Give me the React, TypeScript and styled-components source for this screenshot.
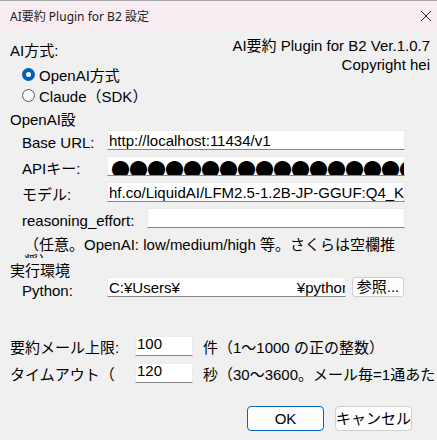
import React from "react";
import styled, { createGlobalStyle } from "styled-components";

const uiFont = `"Liberation Sans", "Noto Sans CJK JP", sans-serif`;

const GlobalStyle = createGlobalStyle`
  html, body {
    margin: 0;
    padding: 0;
    background: #f0f0f0;
  }
  * { box-sizing: border-box; }
`;

const Window = styled.div`
  width: 437px;
  height: 440px;
  background: #f0f0f0;
  border-top: 1px solid #a9a9a9;
  display: flex;
  flex-direction: column;
  font-family: ${uiFont};
  font-size: 15px;
  color: #000;
  overflow: hidden;
`;

const TitleBar = styled.div`
  height: 30px;
  flex: none;
  background: #f7edf3;
  display: flex;
  align-items: center;
  justify-content: space-between;
  padding: 0 5px 0 10px;
  font-family: "Noto Sans", "Noto Sans CJK JP", sans-serif;
  font-size: 12px;
  color: #1b1b1b;
`;

const CloseButton = styled.span`
  display: flex;
  width: 12px;
  height: 12px;
`;

const Body = styled.div`
  display: flex;
  flex-direction: column;
  padding: 0 7px 0 10px;
`;

const Header = styled.div`
  display: flex;
  justify-content: space-between;
  align-items: flex-start;
`;

const LeftCol = styled.div`
  padding-top: 10px;
  display: flex;
  flex-direction: column;
`;

const RightCol = styled.div`
  padding-top: 5px;
  text-align: right;
  line-height: 19px;
  white-space: nowrap;
`;

const Caption = styled.div<{ $h?: number; $mt?: number }>`
  line-height: 20px;
  height: ${(p) => p.$h ?? 20}px;
  margin-top: ${(p) => p.$mt ?? 0}px;
  white-space: nowrap;
`;

const RadioRow = styled.label<{ $first?: boolean }>`
  display: flex;
  align-items: flex-start;
  gap: 4px;
  height: 21px;
  line-height: 20px;
  margin-left: 12px;
  margin-top: ${(p) => (p.$first ? 5 : 0)}px;
  white-space: nowrap;
`;

const RadioMark = styled.span<{ $on?: boolean }>`
  flex: none;
  width: 13px;
  height: 13px;
  margin-top: 2px;
  border-radius: 50%;
  background: ${(p) => (p.$on ? "#005fb8" : "#f7f7f7")};
  border: ${(p) => (p.$on ? "none" : "1px solid #5c5c5c")};
  display: flex;
  align-items: center;
  justify-content: center;

  &::after {
    content: "";
    display: ${(p) => (p.$on ? "block" : "none")};
    width: 5px;
    height: 5px;
    border-radius: 50%;
    background: #fff;
  }
`;

const FieldRow = styled.div<{ $mt?: number }>`
  display: flex;
  align-items: flex-start;
  height: 20px;
  padding-left: 12px;
  margin-top: ${(p) => p.$mt ?? 6}px;
`;

const FieldLabel = styled.span<{ $w: number; $lh?: number }>`
  flex: none;
  width: ${(p) => p.$w}px;
  height: 20px;
  line-height: ${(p) => p.$lh ?? 26}px;
  white-space: nowrap;
`;

const TextBox = styled.div<{ $w: number; $lh?: number }>`
  flex: none;
  width: ${(p) => p.$w}px;
  height: 20px;
  background: #fff;
  border: 1px solid #ebebeb;
  border-bottom-color: #868686;
  padding: 0 1px;
  line-height: ${(p) => p.$lh ?? 20}px;
  white-space: nowrap;
  overflow: hidden;
`;

const Mask = styled.span`
  font-family: "Noto Sans CJK JP", sans-serif;
  font-size: 19px;
  letter-spacing: -1px;
  line-height: 20px;
  display: inline-block;
  padding-left: 2px;
  transform: translateY(2px);
`;

const Gap = styled.span<{ $w: number }>`
  display: inline-block;
  width: ${(p) => p.$w}px;
`;

const Note = styled.div`
  margin-top: 7px;
  padding-left: 14px;
  height: 23px;
  overflow: hidden;
  white-space: nowrap;
`;

const NoteLine = styled.div<{ $lh: number; $pt?: number }>`
  line-height: ${(p) => p.$lh}px;
  padding-top: ${(p) => p.$pt ?? 0}px;
`;

const SmallButton = styled.button`
  flex: none;
  margin-left: 6px;
  width: 52px;
  height: 20px;
  padding: 0;
  background: #fdfdfd;
  border: 1px solid #cfcfcf;
  border-radius: 3px;
  font-family: ${uiFont};
  font-size: 15px;
  line-height: 18px;
  color: #000;
`;

const LimitRow = styled.div<{ $mt: number }>`
  display: flex;
  align-items: flex-start;
  height: 20px;
  margin-top: ${(p) => p.$mt}px;
  white-space: nowrap;
`;

const LimitLabel = styled.span`
  flex: none;
  width: 125px;
  height: 20px;
  line-height: 24px;
`;

const LimitHint = styled.span`
  margin-left: 10px;
  height: 20px;
  line-height: 24px;
`;

const ButtonBar = styled.div`
  display: flex;
  justify-content: flex-end;
  gap: 11px;
  margin-top: 23px;
  padding-right: 18px;
`;

const DialogButton = styled.button<{ $primary?: boolean }>`
  width: 77px;
  height: 25px;
  padding: 0;
  background: #fdfdfd;
  border: 1px solid ${(p) => (p.$primary ? "#0067c0" : "#d0d0d0")};
  border-radius: 4px;
  font-family: ${uiFont};
  font-size: 15px;
  line-height: 23px;
  color: #000;
  white-space: nowrap;
`;

export default function App() {
  return (
    <>
      <GlobalStyle />
      <Window>
        <TitleBar>
          <span>AI要約 Plugin for B2 設定</span>
          <CloseButton>
            <svg width="12" height="12" viewBox="0 0 12 12">
              <path d="M1 1 L11 11 M11 1 L1 11" stroke="#222" strokeWidth="1" fill="none" />
            </svg>
          </CloseButton>
        </TitleBar>
        <Body>
          <Header>
            <LeftCol>
              <Caption>AI方式:</Caption>
              <RadioRow $first>
                <RadioMark $on />
                <span>OpenAI方式</span>
              </RadioRow>
              <RadioRow>
                <RadioMark />
                <span>Claude（SDK）</span>
              </RadioRow>
            </LeftCol>
            <RightCol>
              <div>AI要約 Plugin for B2 Ver.1.0.7</div>
              <div>Copyright hei</div>
            </RightCol>
          </Header>

          <Caption $mt={2}>OpenAI設</Caption>
          <FieldRow $mt={0}>
            <FieldLabel $w={85}>Base URL:</FieldLabel>
            <TextBox $w={298}>http://localhost:11434/v1</TextBox>
          </FieldRow>
          <FieldRow>
            <FieldLabel $w={85}>APIキー:</FieldLabel>
            <TextBox $w={298}>
              <Mask>●●●●●●●●●●●●●●●●●●</Mask>
            </TextBox>
          </FieldRow>
          <FieldRow>
            <FieldLabel $w={85}>モデル:</FieldLabel>
            <TextBox $w={298}>hf.co/LiquidAI/LFM2.5-1.2B-JP-GGUF:Q4_K_M</TextBox>
          </FieldRow>
          <FieldRow>
            <FieldLabel $w={125}>reasoning_effort:</FieldLabel>
            <TextBox $w={258} />
          </FieldRow>
          <Note>
            <NoteLine $lh={18} $pt={1}>（任意。OpenAI: low/medium/high 等。さくらは空欄推</NoteLine>
            <NoteLine $lh={16}>奨）</NoteLine>
          </Note>

          <Caption $mt={3} $h={16}>実行環境</Caption>
          <FieldRow $mt={0}>
            <FieldLabel $w={85} $lh={28}>Python:</FieldLabel>
            <TextBox $w={239}>
              C:¥Users¥<Gap $w={117} />¥python¥python.exe
            </TextBox>
            <SmallButton>参照...</SmallButton>
          </FieldRow>

          <LimitRow $mt={39}>
            <LimitLabel>要約メール上限:</LimitLabel>
            <TextBox $w={58} $lh={14}>100</TextBox>
            <LimitHint>件（1～1000 の正の整数）</LimitHint>
          </LimitRow>
          <LimitRow $mt={7}>
            <LimitLabel>タイムアウト（</LimitLabel>
            <TextBox $w={58} $lh={14}>120</TextBox>
            <LimitHint>秒（30～3600。メール毎=1通あたり）</LimitHint>
          </LimitRow>

          <ButtonBar>
            <DialogButton $primary>OK</DialogButton>
            <DialogButton>キャンセル</DialogButton>
          </ButtonBar>
        </Body>
      </Window>
    </>
  );
}
